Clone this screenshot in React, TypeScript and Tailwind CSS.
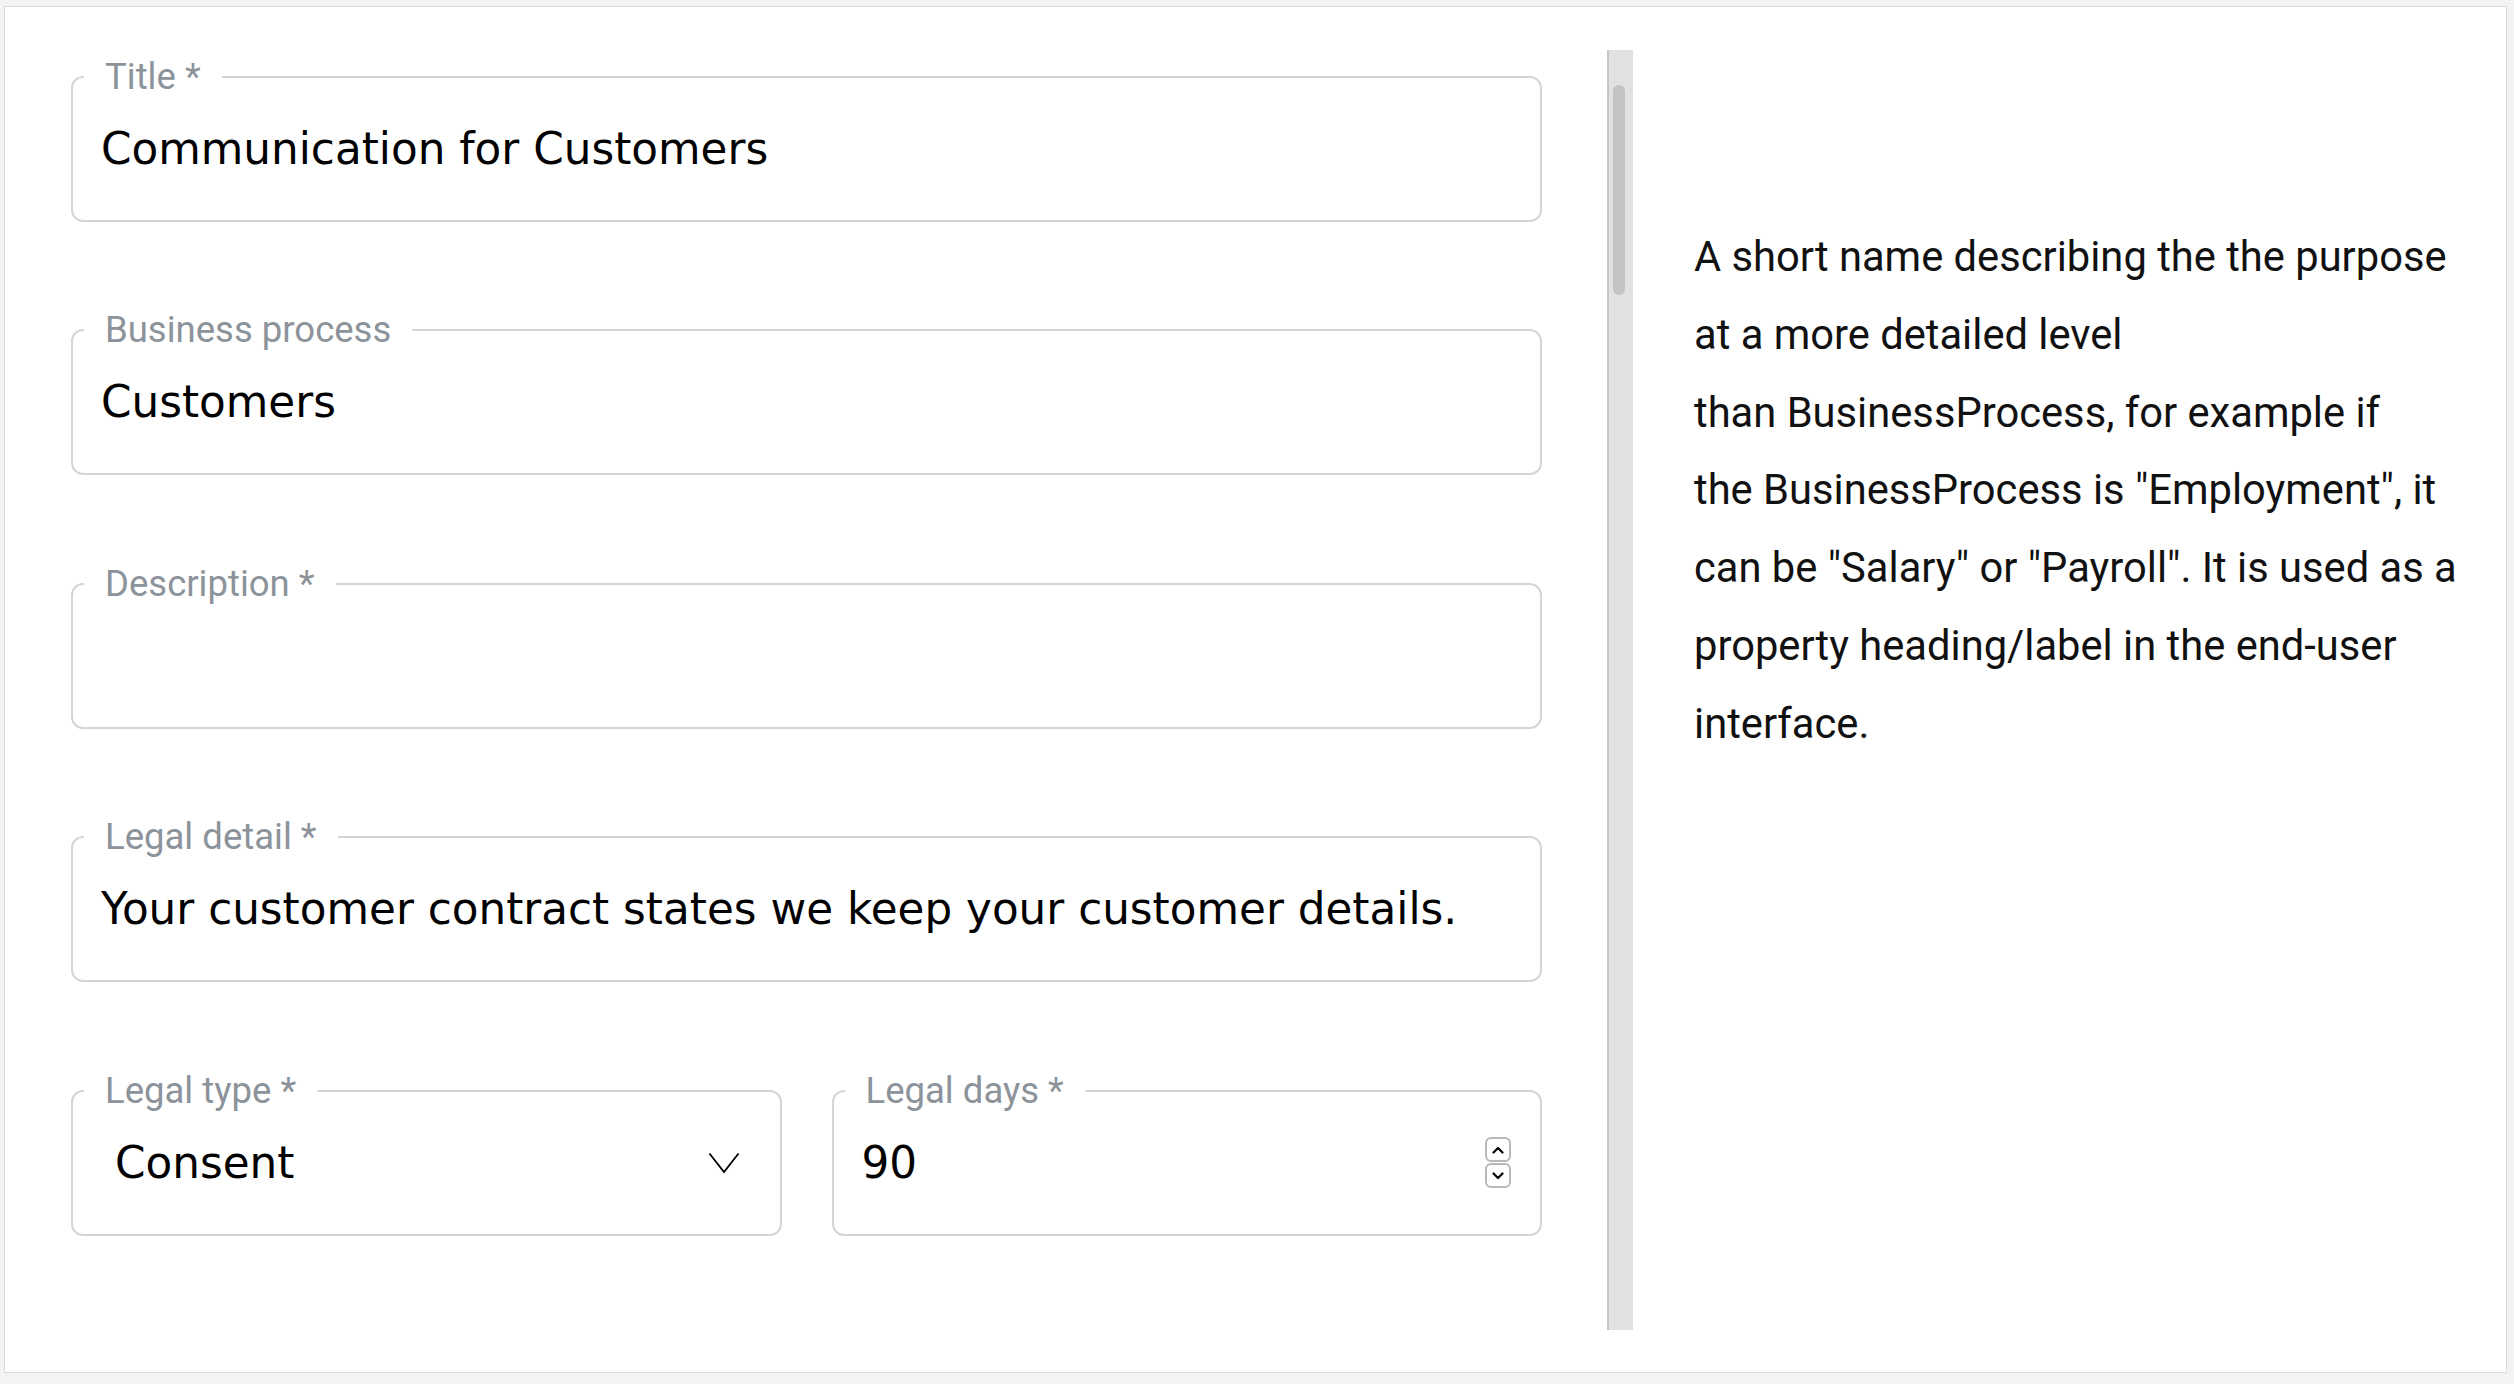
import { ReactNode } from 'react';

const LABEL = "font-['Roboto',sans-serif] text-[36.5px] leading-[44px] text-[#8c939a]";
const VALUE = "font-['DejaVu_Sans',sans-serif] text-[43.7px] leading-[52px] text-black";

const HELP_LINES = [
  'A short name describing the the purpose',
  'at a more detailed level',
  'than BusinessProcess, for example if',
  'the BusinessProcess is "Employment", it',
  'can be "Salary" or "Payroll". It is used as a',
  'property heading/label in the end-user',
  'interface.',
];

function OutlinedField({ label, children }: { label: string; children: ReactNode }) {
  return (
    <fieldset className="min-w-0 rounded-[12px] border-2 border-[#d5d5d5]">
      <legend className={`ml-[11px] px-[21px] ${LABEL}`}>{label}</legend>
      <div className="h-[121px] pt-[24px]">{children}</div>
    </fieldset>
  );
}

function TextInput({ value = '' }: { value?: string }) {
  return (
    <input
      readOnly
      value={value}
      className={`h-[52px] w-full bg-transparent px-[28px] outline-none ${VALUE}`}
    />
  );
}

function Chevron({ up = false }: { up?: boolean }) {
  return (
    <svg width="12" height="8" viewBox="0 0 12 8" className="text-black">
      <polyline
        points={up ? '1.5,6.5 6,2 10.5,6.5' : '1.5,1.5 6,6 10.5,1.5'}
        fill="none"
        stroke="currentColor"
        strokeWidth="2.2"
        strokeLinecap="round"
        strokeLinejoin="round"
      />
    </svg>
  );
}

function SelectField({ label, value }: { label: string; value: string }) {
  return (
    <OutlinedField label={label}>
      <div className="flex h-[52px] items-center justify-between pl-[42px] pr-[40px]">
        <span className={VALUE}>{value}</span>
        <svg width="32" height="22" viewBox="0 0 32 22">
          <polyline points="1.5,1.5 16,20 30.5,1.5" fill="none" stroke="#000" strokeWidth="1.8" />
        </svg>
      </div>
    </OutlinedField>
  );
}

function NumberField({ label, value }: { label: string; value: string }) {
  return (
    <OutlinedField label={label}>
      <div className="flex h-[52px] items-center pr-[29px]">
        <input
          readOnly
          value={value}
          className={`h-[52px] min-w-0 flex-1 bg-transparent pl-[28px] outline-none ${VALUE}`}
        />
        <div className="flex flex-col gap-[1px]">
          <button className="flex h-[25px] w-[26px] items-center justify-center rounded-[6px] border-2 border-[#b8b8b8]">
            <Chevron up />
          </button>
          <button className="flex h-[25px] w-[26px] items-center justify-center rounded-[6px] border-2 border-[#b8b8b8]">
            <Chevron />
          </button>
        </div>
      </div>
    </OutlinedField>
  );
}

export default function App() {
  return (
    <div className="min-h-screen bg-[#f3f3f3] pl-[4px] pt-[6px]">
      <div className="flex h-[1367px] w-[2503px] border border-[#dadada] bg-white">
        {/* Form column with its scrollbar */}
        <div className="mt-[43px] flex h-[1280px] w-[1628px] shrink-0">
          <div className="flex flex-1 flex-col gap-[86.5px] overflow-hidden pl-[66px] pr-[65px] pt-[4.7px]">
            <OutlinedField label="Title *">
              <TextInput value="Communication for Customers" />
            </OutlinedField>
            <OutlinedField label="Business process">
              <TextInput value="Customers" />
            </OutlinedField>
            <OutlinedField label="Description *">
              <TextInput />
            </OutlinedField>
            <OutlinedField label="Legal detail *">
              <TextInput value="Your customer contract states we keep your customer details." />
            </OutlinedField>
            <div className="grid grid-cols-2 gap-x-[50px]">
              <SelectField label="Legal type *" value="Consent" />
              <NumberField label="Legal days *" value="90" />
            </div>
          </div>
          <div className="flex w-[26px] flex-col border-l-2 border-[#c6c6c6] bg-[#e1e1e1] pl-[4px] pt-[35px]">
            <div className="h-[210px] w-[12px] rounded-full bg-[#c3c3c3]" />
          </div>
        </div>

        {/* Help text */}
        <div className="flex-1 pl-[61px] pt-[211px] font-['Roboto',sans-serif] text-[41.7px] leading-[77.8px] text-[#111]">
          <p>
            {HELP_LINES.map((line, i) => (
              <span key={i} className="block whitespace-nowrap">
                {line}
              </span>
            ))}
          </p>
        </div>
      </div>
    </div>
  );
}
